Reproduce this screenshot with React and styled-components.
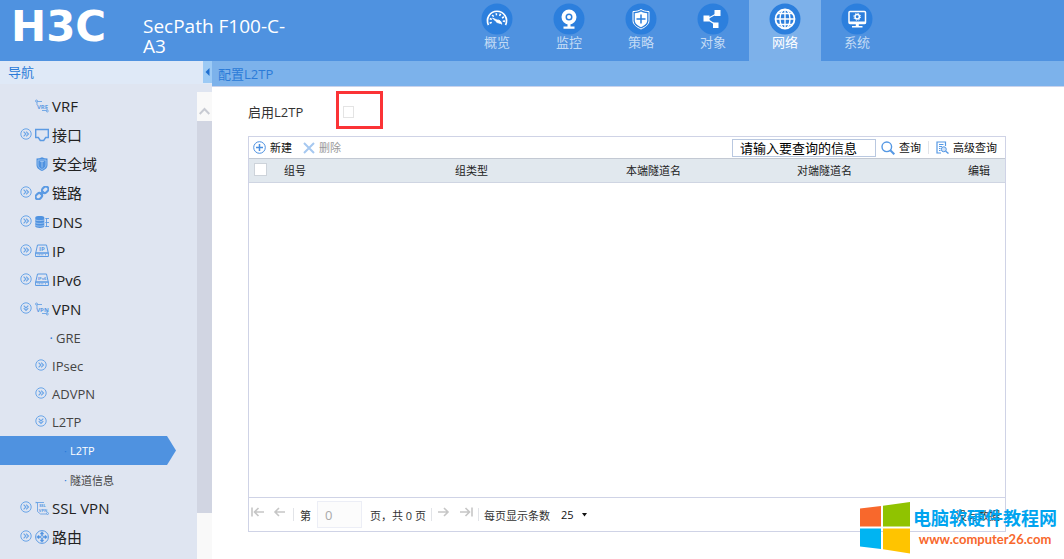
import React, { useState } from "react";
import styled, { createGlobalStyle } from "styled-components";

const GlobalStyle = createGlobalStyle`
  * {
    box-sizing: border-box;
  }

  body {
    margin: 0;
    background: #fff;
    color: #333;
    font-family: "Open Sans", "Noto Sans CJK SC", sans-serif;
    font-size: 11px;
  }

  button, input, select {
    font-family: inherit;
    font-size: inherit;
    color: inherit;
  }

  button {
    padding: 0;
    border: none;
    background: none;
  }

  a {
    color: inherit;
    text-decoration: none;
  }
`;

const Page = styled.div`
  position: relative;
  display: flex;
  flex-direction: column;
  height: 100vh;
  overflow: hidden;
`;

const Header = styled.header`
  display: flex;
  flex: none;
  height: 61px;
  background: #4f92e0;
  color: #fff;
`;

const Logo = styled.div`
  flex: none;
  width: 143px;
  padding-left: 11px;
  font-family: "DejaVu Sans", sans-serif;
  font-size: 42px;
  font-weight: 700;
  line-height: 53px;
`;

const Product = styled.h1`
  flex: none;
  width: 150px;
  margin: 16px 168px 0 0;
  font-size: 19px;
  font-weight: 400;
  line-height: 20px;
`;

const Tabs = styled.nav`
  display: flex;
`;

const Tab = styled.a`
  display: flex;
  flex-direction: column;
  align-items: center;
  width: 72px;
  padding-top: 3px;
  background: ${(props) => (props.$active ? "#7db1ea" : "transparent")};
  color: ${(props) => (props.$active ? "#fff" : "#c3dbf5")};
  font-size: 13px;
  line-height: 15px;

  & svg {
    display: block;
  }
`;

const Body = styled.div`
  display: flex;
  flex: 1;
  min-height: 0;
`;

const Sidebar = styled.aside`
  display: flex;
  flex-direction: column;
  flex: none;
  width: 212px;
  background: #dfe5f1;
`;

const SidebarHead = styled.div`
  display: flex;
  justify-content: space-between;
  flex: none;
  height: 23px;
  padding-left: 8px;
  background: #dfe9f7;
  color: #2b7bd8;
  font-size: 13px;
  line-height: 22px;
`;

const Collapse = styled.button`
  display: flex;
  align-items: center;
  justify-content: center;
  width: 9px;
  height: 22px;
  background: #9ccaf5;
`;

const SidebarBody = styled.div`
  display: flex;
  flex: 1;
  min-height: 0;
  padding-top: 8px;
`;

const Tree = styled.ul`
  flex: 1;
  margin: 0;
  padding: 0;
  list-style: none;
  overflow: hidden;
`;

const levels = {
  1: { height: 29, indent: 20, size: 15, color: "#222", bottom: 2 },
  2: { height: 28, indent: 35, size: 13, color: "#444", bottom: 0 },
  3: { height: 29, indent: 64, size: 11, color: "#444", bottom: 0 },
};

const TreeItem = styled.li`
  display: flex;
  align-items: center;
  gap: 3px;
  width: 176px;
  height: ${(props) => levels[props.$level].height}px;
  padding-left: ${(props) => levels[props.$level].indent}px;
  padding-bottom: ${(props) => levels[props.$level].bottom}px;
  background: ${(props) => (props.$active ? "#4f92e0" : "transparent")};
  color: ${(props) => (props.$active ? "#fff" : levels[props.$level].color)};
  font-size: ${(props) => levels[props.$level].size}px;
  clip-path: ${(props) =>
    props.$active ? "polygon(0 0, 167px 0, 100% 50%, 167px 100%, 0 100%)" : "none"};

  & svg {
    display: block;
  }

  & a {
    white-space: nowrap;
  }
`;

const Toggle = styled.button`
  width: ${(props) => (props.$wide ? 14 : 12)}px;
  padding-bottom: 2px;
`;

const Blank = styled.span`
  width: 12px;
`;

const Dot = styled.span`
  width: ${(props) => (props.$level === 2 ? 18 : 3)}px;
  color: #2b7bd8;
  text-align: right;
`;

const ScrollBar = styled.div`
  display: flex;
  flex-direction: column;
  width: 15px;
  padding-bottom: 46px;
  background: #f9f9f9;
`;

const ScrollUp = styled.button`
  display: flex;
  align-items: center;
  justify-content: center;
  height: 29px;
  padding-top: 9px;
`;

const ScrollThumb = styled.div`
  flex: 1;
  background: #d1d5e2;
`;

const Main = styled.main`
  display: flex;
  flex-direction: column;
  flex: 1;
  min-width: 0;
`;

const Crumb = styled.div`
  flex: none;
  height: 26px;
  padding-left: 6px;
  border-bottom: 1px solid #c9d3ec;
  background: #7cb2eb;
  color: #2b7bd8;
  font-size: 13px;
  line-height: 26px;
`;

const Content = styled.div`
  display: flex;
  flex-direction: column;
  flex: 1;
  min-height: 0;
  padding: 4px 58px 27px 36px;
`;

const EnableRow = styled.div`
  display: flex;
  align-items: center;
  margin-bottom: 7px;

  & label {
    width: 88px;
    padding-top: 4px;
    font-size: 13px;
    line-height: 18px;
  }
`;

const Highlight = styled.div`
  display: flex;
  align-items: center;
  width: 47px;
  height: 38px;
  padding: 4px 0 0 4px;
  border: 3px solid #fb3336;
`;

const CheckBox = styled.input`
  appearance: none;
  display: block;
  width: ${(props) => (props.$faint ? 11 : 13)}px;
  height: ${(props) => (props.$faint ? 12 : 13)}px;
  margin: 0;
  border: 1px solid ${(props) => (props.$faint ? "#e4e4e4" : "#cdd3da")};
  background: #fff;
`;

const Panel = styled.section`
  display: flex;
  flex-direction: column;
  flex: 1;
  min-height: 0;
  border: 1px solid #cfd3e6;
`;

const Toolbar = styled.div`
  display: flex;
  align-items: center;
  flex: none;
  height: 21px;
  padding: 0 8px 0 4px;
`;

const ToolButton = styled.button`
  display: flex;
  align-items: center;
  gap: 4px;
  margin-right: ${(props) => props.$space || 0}px;
  color: ${(props) => (props.disabled ? "#999" : "#111")};
  line-height: 18px;
  white-space: nowrap;
`;

const Divider = styled.span`
  flex: none;
  width: 1px;
  height: 13px;
  margin: 0 ${(props) => props.$space || 6}px;
  background: #e2e4e8;
`;

const SearchInput = styled.input`
  width: 144px;
  height: 18px;
  margin: 0 5px 0 auto;
  padding: 0 7px;
  border: 1px solid #b9c8e0;
  color: #000;
  font-size: 13px;
`;

const Table = styled.table`
  flex: none;
  width: 100%;
  border-collapse: collapse;
  table-layout: fixed;

  & th {
    height: 24px;
    padding: 0 0 2px 7px;
    border-top: 1px solid #c3c9d3;
    border-bottom: 1px solid #cfd5e2;
    background: #e1e8ee;
    color: #222;
    font-weight: 400;
    text-align: left;
    white-space: nowrap;
  }

  & th:first-child {
    width: 28px;
    padding-left: 5px;
  }

  & th:last-child {
    width: 44px;
  }
`;

const Rows = styled.div`
  flex: 1;
`;

const Pager = styled.footer`
  display: flex;
  align-items: center;
  flex: none;
  height: 34px;
  padding: 0 5px 0 2px;
  border-top: 1px solid #cfd3e6;
  white-space: nowrap;
`;

const PageButton = styled.button`
  width: 14px;
  margin-right: ${(props) => props.$space || 0}px;
  padding-bottom: 6px;

  & svg {
    display: block;
  }
`;

const PageInput = styled.input`
  width: 45px;
  height: 27px;
  margin: 0 8px 0 6px;
  padding: 0 7px;
  border: 1px solid #eceef6;
  background: #fcfcfc;
  color: #aaa;
  font-size: 13px;
`;

const SizeSelect = styled.div`
  display: flex;
  align-items: center;
  margin-left: 11px;
  color: #111;

  & select {
    appearance: none;
    width: 21px;
    padding: 0;
    border: none;
    background: none;
  }
`;

const Empty = styled.span`
  margin-left: auto;
`;

const Watermark = styled.div`
  position: absolute;
  right: 7px;
  bottom: 5px;
  display: flex;
  gap: 3px;
  color: #00a4ef;
  font-size: 18px;
  font-weight: 700;
  line-height: 32px;
  text-align: center;
  white-space: nowrap;

  & a {
    display: block;
    color: #f8682c;
    font-family: Lato, sans-serif;
    font-size: 13px;
    line-height: 11px;
  }
`;

function TabIcon({ name }) {
  return (
    <svg width="32" height="32" viewBox="0 0 32 32" fill="none" stroke="#fff" aria-hidden="true">
      <circle cx="16" cy="16" r="15.5" fill="#2c7fdd" stroke="none" />
      {name === "gauge" && (
        <>
          <path d="M7.500 22a9.500 9.500 0 1 1 17 0" strokeWidth="1.700" />
          <path d="M10 20.500a6.700 6.700 0 1 1 12.500-.3" strokeWidth="2.200" strokeDasharray="1.600 2.200" />
          <path d="M11.500 15l4.500 2c2.500-.5 4.500 1.500 4.800 4.200-1.500-1.500-4.800-.8-5.800-2.700z" fill="#fff" strokeWidth=".8" />
        </>
      )}
      {name === "camera" && (
        <>
          <circle cx="16" cy="14" r="5.500" strokeWidth="4" />
          <circle cx="16" cy="14" r="2" fill="#fff" stroke="none" />
          <path d="M14.500 21h3v2.500h-3zM10.500 23.500h11v2.200h-11z" fill="#fff" stroke="none" />
        </>
      )}
      {name === "shield" && (
        <>
          <path d="M16 6.500c2.500 1.500 5 2 8 2v9c0 4-3.500 6.500-8 8.500-4.500-2-8-4.500-8-8.500v-9c3 0 5.500-.5 8-2z" strokeWidth="1" />
          <path d="M16 8.500c2 1.200 4 1.700 6.200 1.700V17.500c0 3-2.500 5-6.200 6.700-3.700-1.700-6.200-3.700-6.200-6.700v-7.300c2.200 0 4.200-.5 6.200-1.700z" fill="#fff" stroke="none" />
          <path d="M16 11.500v9M11.500 16h9" stroke="#2c7fdd" strokeWidth="1.500" />
        </>
      )}
      {name === "share" && (
        <>
          <path d="M20 10.500l-10 5.500 9 6" strokeWidth="1.200" />
          <path d="M17.500 7h6v6h-6zM6.500 12.500h6v6h-6zM16 19.500h5.500v5.500H16z" fill="#fff" stroke="none" />
        </>
      )}
      {name === "globe" && (
        <>
          <circle cx="16" cy="16" r="9.500" strokeWidth="1.800" />
          <ellipse cx="16" cy="16" rx="5" ry="9.500" strokeWidth="1.400" />
          <path d="M16 6.500v19M6.500 16h19M8.500 10.500h15M8.500 21.500h15" strokeWidth="1.400" />
        </>
      )}
      {name === "monitor" && (
        <>
          <rect x="8" y="8.500" width="16.500" height="12" rx="1" strokeWidth="1.500" />
          <path d="M8 18.500h16.500v2.500H8zM14.800 21h3v2h-3zM11 23h10.500v1.500H11z" fill="#fff" stroke="none" />
          <circle cx="16.200" cy="13.800" r="2.200" strokeWidth="1.500" />
          <circle cx="16.200" cy="13.800" r="3.400" strokeWidth="1" strokeDasharray="1.300 1.370" />
        </>
      )}
    </svg>
  );
}

function TreeIcon({ name }) {
  return (
    <svg width="14" height="14" viewBox="0 0 14 14" fill="none" stroke="#5b9ae3" aria-hidden="true">
      {(name === "VRF" || name === "VPN") && (
        <>
          <path d="M2 3v-.5h5M2 3v3M7 11.500h4.500M12 8v3" strokeWidth=".8" />
          <circle cx="1.500" cy="2" r="1" fill="#dfe5f1" strokeWidth=".8" />
          <circle cx="12.300" cy="12" r="1" fill="#dfe5f1" strokeWidth=".8" />
          <text x="7.500" y="9.500" fill="#5b9ae3" stroke="none" fontSize="6" fontWeight="700" textAnchor="middle">{name}</text>
        </>
      )}
      {name === "port" && <path d="M.7 1.500h12.600v8h-2.600L8.700 12.500H5.300L3.300 9.500H.7z" strokeWidth="1.400" />}
      {name === "shield" && (
        <>
          <path d="M7 .3c1.700.8 3.500 1.200 5.500 1.200v6.500c0 3-2.500 4.800-5.500 6-3-1.200-5.500-3-5.500-6V1.500C3.500 1.500 5.300 1.100 7 .3z" fill="#4f92e0" stroke="none" />
          <path d="M3 3h8v5c0 2-1.500 3.300-4 4.500C4.500 11.300 3 10 3 8z" stroke="#a9cbf2" strokeWidth=".8" />
          <path d="M7 4.500v6M5.200 4.500h3.600" stroke="#a9cbf2" strokeWidth=".8" />
        </>
      )}
      {name === "link" && (
        <g transform="rotate(-45 7 7)" strokeWidth="2.100">
          <rect x="-1" y="4.400" width="7" height="5.200" rx="2.600" />
          <rect x="8" y="4.400" width="7" height="5.200" rx="2.600" />
          <path d="M4.500 7h5" />
        </g>
      )}
      {name === "db" && (
        <>
          <path d="M.3 2.500C.3.600 9.300.600 9.300 2.500v9c0 1.900-9 1.900-9 0z" fill="#4f92e0" stroke="none" />
          <path d="M.3 4.700c1 1.200 8 1.200 9 0M.3 7.500c1 1.200 8 1.200 9 0M.3 10.200c1 1.200 8 1.200 9 0" stroke="#b9d4f3" strokeWidth=".7" />
          <path d="M10.300 3.500H14M10.300 7.500H14M10.300 11.500H14M11.500 3v9" strokeWidth=".9" />
        </>
      )}
      {(name === "IP" || name === "IPv6") && (
        <>
          <path d="M2.500 1h9l1.800 8H.7zM.6 9h12.800v3.500H.6z" strokeWidth="1" />
          <path d="M2.500 10.800h6M10 10.800h1.500" strokeWidth="1" strokeDasharray="1 .6" />
          <text x="7" y="7" fill="#5b9ae3" stroke="none" fontSize={name === "IP" ? 6 : 4} fontWeight="700" textAnchor="middle">{name}</text>
        </>
      )}
      {name === "ssl" && (
        <>
          <path d="M1 1.500h8M2.500 1.500v9l3 2.500h6M1 .8v1.500" strokeWidth=".8" />
          <circle cx="12.500" cy="12.500" r="1" strokeWidth=".8" />
          <text x="7.500" y="6" fill="#5b9ae3" stroke="none" fontSize="4" fontWeight="700" textAnchor="middle">SSL</text>
          <text x="8" y="10.500" fill="#5b9ae3" stroke="none" fontSize="4" fontWeight="700" textAnchor="middle">VPN</text>
        </>
      )}
      {name === "route" && (
        <>
          <circle cx="7" cy="7" r="6.400" strokeWidth="1" />
          <path d="M7 1.500l2 2.500H7.700v2.300H10V5l2.500 2L10 9V7.700H7.700V10H9l-2 2.500L5 10h1.300V7.700H4V9L1.500 7 4 5v1.300h2.300V4H5z" fill="#4f92e0" strokeWidth=".3" />
          <circle cx="7" cy="7" r="1.300" fill="#dfe5f1" strokeWidth=".6" />
        </>
      )}
    </svg>
  );
}

function ToggleIcon({ open }) {
  return (
    <svg width="12" height="12" viewBox="0 0 12 12" fill="none" stroke="#6aa5e8" aria-hidden="true">
      <circle cx="6" cy="6" r="5.200" />
      <g transform={open ? "rotate(90 6 6)" : undefined} strokeWidth="1.100">
        <path d="M3.600 3.700L5.900 6 3.600 8.300M6.200 3.700L8.500 6 6.200 8.300" />
      </g>
    </svg>
  );
}

const arrows = {
  first: "M1 1.500v9M13 6H3.500M7.500 2L3.500 6l4 4",
  prev: "M12 6H2M6 2L2 6l4 4",
  next: "M1 6h10M7 2l4 4-4 4",
  last: "M13 1.500v9M1 6h9.500M6.500 2l4 4-4 4",
};

function Arrow({ name }) {
  return (
    <svg width="14" height="12" viewBox="0 0 14 12" fill="none" stroke="#c6c6c6" strokeWidth="1.600" aria-hidden="true">
      <path d={arrows[name]} />
    </svg>
  );
}

const tabs = [
  { icon: "gauge", text: "概览" },
  { icon: "camera", text: "监控" },
  { icon: "shield", text: "策略" },
  { icon: "share", text: "对象" },
  { icon: "globe", text: "网络", active: true },
  { icon: "monitor", text: "系统" },
];

const tree = [
  { level: 1, icon: "VRF", text: "VRF" },
  { level: 1, icon: "port", text: "接口", toggle: true },
  { level: 1, icon: "shield", text: "安全域" },
  { level: 1, icon: "link", text: "链路", toggle: true },
  { level: 1, icon: "db", text: "DNS", toggle: true },
  { level: 1, icon: "IP", text: "IP", toggle: true },
  { level: 1, icon: "IPv6", text: "IPv6", toggle: true },
  { level: 1, icon: "VPN", text: "VPN", toggle: true, open: true },
  { level: 2, text: "GRE" },
  { level: 2, text: "IPsec", toggle: true },
  { level: 2, text: "ADVPN", toggle: true },
  { level: 2, text: "L2TP", toggle: true, open: true },
  { level: 3, text: "L2TP", active: true },
  { level: 3, text: "隧道信息" },
  { level: 1, icon: "ssl", text: "SSL VPN", toggle: true },
  { level: 1, icon: "route", text: "路由", toggle: true },
];

const columns = ["组号", "组类型", "本端隧道名", "对端隧道名", "编辑"];

function TreeNode({ node }) {
  return (
    <TreeItem $level={node.level} $active={node.active}>
      {node.toggle && (
        <Toggle type="button" $wide={node.level === 2} aria-label={node.text} aria-expanded={!!node.open}>
          <ToggleIcon open={node.open} />
        </Toggle>
      )}
      {!node.toggle && node.level === 1 && <Blank />}
      {!node.toggle && node.level > 1 && <Dot $level={node.level}>·</Dot>}
      {node.icon && <TreeIcon name={node.icon} />}
      <a href="#">{node.text}</a>
    </TreeItem>
  );
}

function App() {
  const [enabled, setEnabled] = useState(false);
  const [query, setQuery] = useState("请输入要查询的信息");

  return (
    <Page>
      <GlobalStyle />
      <Header>
        <Logo>H3C</Logo>
        <Product>SecPath F100-C-A3</Product>
        <Tabs>
          {tabs.map((tab) => (
            <Tab key={tab.icon} href="#" $active={tab.active}>
              <TabIcon name={tab.icon} />
              {tab.text}
            </Tab>
          ))}
        </Tabs>
      </Header>

      <Body>
        <Sidebar>
          <SidebarHead>
            导航
            <Collapse type="button" aria-label="收起导航">
              <svg width="5" height="8" viewBox="0 0 5 8" aria-hidden="true">
                <path d="M4.500 0v8L.5 4z" fill="#1f6fd0" />
              </svg>
            </Collapse>
          </SidebarHead>
          <SidebarBody>
            <Tree>
              {tree.map((node, index) => (
                <TreeNode key={index} node={node} />
              ))}
            </Tree>
            <ScrollBar>
              <ScrollUp type="button" aria-label="向上滚动">
                <svg width="11" height="8" viewBox="0 0 11 8" fill="none" stroke="#c8cbd3" strokeWidth="2" aria-hidden="true">
                  <path d="M.7 7l4.800-5 4.800 5" />
                </svg>
              </ScrollUp>
              <ScrollThumb />
            </ScrollBar>
          </SidebarBody>
        </Sidebar>

        <Main>
          <Crumb>配置L2TP</Crumb>
          <Content>
            <EnableRow>
              <label htmlFor="enable">启用L2TP</label>
              <Highlight>
                <CheckBox
                  id="enable"
                  type="checkbox"
                  $faint
                  checked={enabled}
                  onChange={(e) => setEnabled(e.target.checked)}
                />
              </Highlight>
            </EnableRow>

            <Panel>
              <Toolbar>
                <ToolButton type="button" $space={11}>
                  <svg width="13" height="13" viewBox="0 0 13 13" fill="none" stroke="#4a8fe0" aria-hidden="true">
                    <circle cx="6.500" cy="6.500" r="5.800" />
                    <path d="M6.500 3v7M3 6.500h7" strokeWidth="1.500" />
                  </svg>
                  新建
                </ToolButton>
                <ToolButton type="button" disabled>
                  <svg width="12" height="12" viewBox="0 0 12 12" fill="none" stroke="#a6c8f0" strokeWidth="2" aria-hidden="true">
                    <path d="M1 1l10 10M11 1L1 11" />
                  </svg>
                  删除
                </ToolButton>
                <SearchInput aria-label="查询" value={query} onChange={(e) => setQuery(e.target.value)} />
                <ToolButton type="button">
                  <svg width="14" height="14" viewBox="0 0 14 14" fill="none" stroke="#5598e4" aria-hidden="true">
                    <circle cx="5.800" cy="5.800" r="4.800" strokeWidth="1.400" />
                    <path d="M9.300 9.300l4 4" strokeWidth="2" />
                  </svg>
                  查询
                </ToolButton>
                <Divider $space={7} />
                <ToolButton type="button">
                  <svg width="13" height="13" viewBox="0 0 13 13" fill="none" stroke="#5598e4" aria-hidden="true">
                    <path d="M5 12H1V1h8.500v4" strokeWidth="1.200" />
                    <path d="M3 3.500h4.500M3 5.500h3M3 7.500h1.500M3 9.500h1.500" />
                    <circle cx="7.800" cy="8.300" r="2.500" fill="#cfe1f7" />
                    <path d="M9.700 10.200l2.800 2.300" strokeWidth="1.400" />
                  </svg>
                  高级查询
                </ToolButton>
              </Toolbar>

              <Table>
                <thead>
                  <tr>
                    <th>
                      <CheckBox type="checkbox" aria-label="全选" />
                    </th>
                    {columns.map((column) => (
                      <th key={column}>{column}</th>
                    ))}
                  </tr>
                </thead>
              </Table>
              <Rows />

              <Pager>
                <PageButton type="button" $space={8} aria-label="首页"><Arrow name="first" /></PageButton>
                <PageButton type="button" aria-label="上一页"><Arrow name="prev" /></PageButton>
                <Divider />
                <label htmlFor="page">第</label>
                <PageInput id="page" defaultValue="0" disabled />
                页，共 0 页
                <Divider $space={5} />
                <PageButton type="button" $space={8} aria-label="下一页"><Arrow name="next" /></PageButton>
                <PageButton type="button" aria-label="末页"><Arrow name="last" /></PageButton>
                <Divider $space={5} />
                <label htmlFor="size">每页显示条数</label>
                <SizeSelect>
                  <select id="size" defaultValue="25">
                    <option>25</option>
                    <option>50</option>
                  </select>
                  <svg width="5" height="4" viewBox="0 0 5 4" aria-hidden="true">
                    <path d="M0 0h5L2.500 3.500z" fill="#111" />
                  </svg>
                </SizeSelect>
                <Empty>没有数据</Empty>
              </Pager>
            </Panel>
          </Content>
        </Main>
      </Body>

      <Watermark>
        <svg width="50" height="52" viewBox="0 0 50 52" aria-hidden="true">
          <path d="M0 6.500L21 4v20.500H0z" fill="#f8682c" />
          <path d="M23 3.700L50 0v24.500H23z" fill="#90c300" />
          <path d="M0 26.500h21V47L0 44.500z" fill="#00b4f2" />
          <path d="M23 26.500h27V51.500L23 47.300z" fill="#ffc400" />
        </svg>
        <div>
          电脑软硬件教程网
          <a href="#">www.computer26.com</a>
        </div>
      </Watermark>
    </Page>
  );
}

export default App;
